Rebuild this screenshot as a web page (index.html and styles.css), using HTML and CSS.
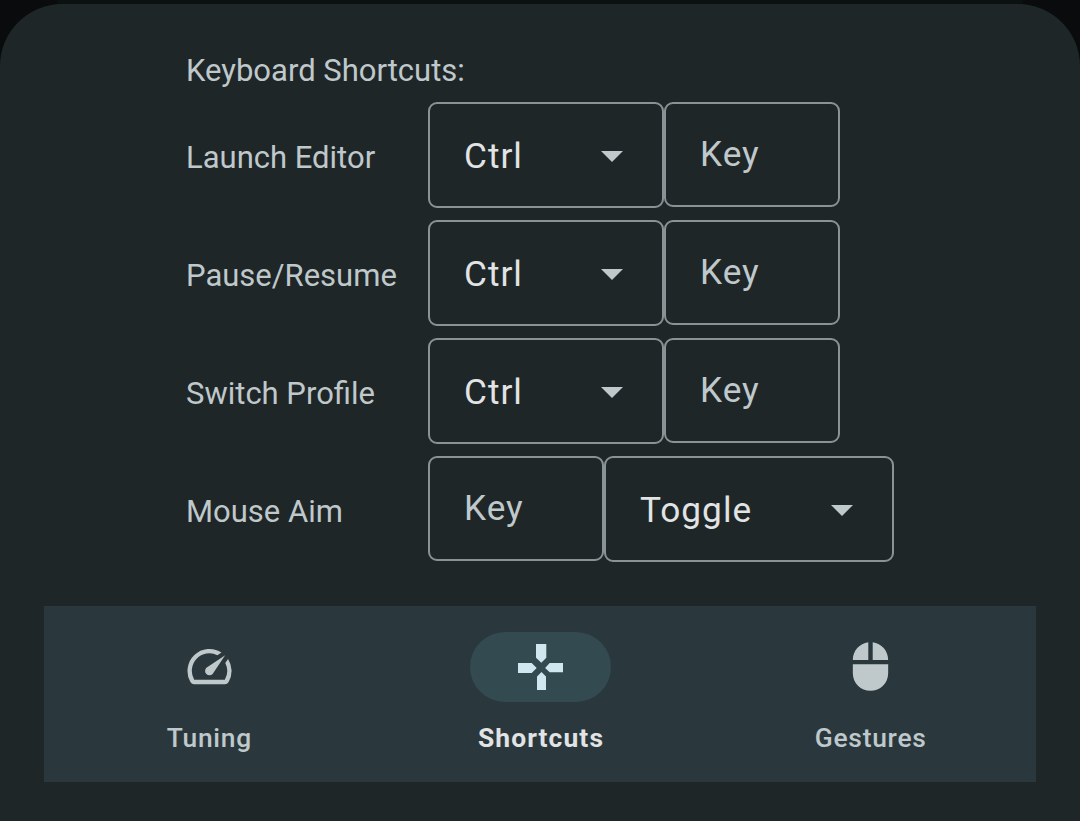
FILE: index.html
```html
<!DOCTYPE html>
<html lang="en">
<head>
<meta charset="utf-8">
<title>Keyboard Shortcuts</title>
<link rel="stylesheet" href="styles.css">
</head>
<body>
<main class="sheet">
  <section class="shortcuts">
    <h1 class="title">Keyboard Shortcuts:</h1>
    <div class="row">
      <span class="label">Launch Editor</span>
      <div class="select"><span>Ctrl</span><svg class="caret" viewBox="0 0 22 11"><path d="M0 0h22L11 11z"/></svg></div>
      <div class="key">Key</div>
    </div>
    <div class="row">
      <span class="label">Pause/Resume</span>
      <div class="select"><span>Ctrl</span><svg class="caret" viewBox="0 0 22 11"><path d="M0 0h22L11 11z"/></svg></div>
      <div class="key">Key</div>
    </div>
    <div class="row">
      <span class="label">Switch Profile</span>
      <div class="select"><span>Ctrl</span><svg class="caret" viewBox="0 0 22 11"><path d="M0 0h22L11 11z"/></svg></div>
      <div class="key">Key</div>
    </div>
    <div class="row">
      <span class="label">Mouse Aim</span>
      <div class="key">Key</div>
      <div class="select select-wide"><span>Toggle</span><svg class="caret" viewBox="0 0 22 11"><path d="M0 0h22L11 11z"/></svg></div>
    </div>
  </section>
  <nav class="tabs">
    <a class="tab">
      <span class="pill"><svg class="icon" viewBox="0 0 24 24"><path d="M20.38 8.57l-1.23 1.85a8 8 0 0 1-.22 7.58H5.07A8 8 0 0 1 15.58 6.85l1.85-1.23A10 10 0 0 0 3.35 19a2 2 0 0 0 1.72 1h13.85a2 2 0 0 0 1.74-1 10 10 0 0 0-.27-10.44zm-9.79 6.84a2 2 0 0 0 2.83 0l5.66-8.49-8.49 5.66a2 2 0 0 0 0 2.83z"/></svg></span>
      <span class="tab-label">Tuning</span>
    </a>
    <a class="tab tab-active">
      <span class="pill"><svg class="icon-pad" viewBox="0 0 45 46"><path d="M18 0h10.3v13.7l-5 5-5.3-5zM0 19h13.7l5 5-5 5H0zM45 19H31.7l-4.6 5 4.6 4.3H45zM19 46h9V32.5L23.5 28 19 32.5z"/></svg></span>
      <span class="tab-label">Shortcuts</span>
    </a>
    <a class="tab">
      <span class="pill"><svg class="icon" viewBox="0 0 24 24"><path d="M13 1.07V9h7c0-4.08-3.05-7.44-7-7.93zM4 15c0 4.42 3.58 8 8 8s8-3.58 8-8v-4H4v4zm7-13.93C7.05 1.56 4 4.92 4 9h7V1.07z"/></svg></span>
      <span class="tab-label">Gestures</span>
    </a>
  </nav>
</main>
</body>
</html>
```
FILE: styles.css
```css
* { box-sizing: border-box; }
body {
  margin: 0;
  padding-top: 4px;
  height: 821px;
  overflow: hidden;
  background: linear-gradient(90deg, #090b0c 57px, #0b1011 57px, #0b1011 1023px, #090b0c 1023px);
  font-family: Roboto, sans-serif;
  color: #bfc8ca;
}
.sheet {
  height: 817px;
  padding: 48px 44px 0;
  border-radius: 62px 62px 0 0;
  background: #1f2628;
}
.shortcuts {
  height: 554px;
  padding-left: 142px;
}
.title {
  margin: 0;
  height: 50px;
  font-size: 31px;
  font-weight: 400;
  line-height: 37px;
}
.row {
  display: flex;
  align-items: flex-start;
  height: 118px;
}
.label {
  width: 242px;
  font-size: 31px;
  line-height: 112px;
}
.select, .key {
  border: 2px solid #899294;
  border-radius: 9px;
  padding-left: 34px;
  font-size: 35.2px;
  letter-spacing: 1px;
}
.select {
  display: flex;
  align-items: center;
  justify-content: space-between;
  width: 236px;
  height: 106px;
  padding: 2px 39.5px 0 34px;
  color: #e1e3e4;
}
.select-wide { width: 290px; }
.key {
  width: 176px;
  height: 105px;
  line-height: 101px;
}
.caret {
  width: 22px;
  height: 11px;
  margin-top: 1px;
  color: #bfc8ca;
}
svg { display: block; fill: currentColor; }
.tabs {
  display: flex;
  height: 176px;
  padding-top: 26px;
  background: #2a383d;
}
.tab {
  flex: 1;
  display: flex;
  flex-direction: column;
  align-items: center;
}
.pill {
  display: flex;
  align-items: center;
  justify-content: center;
  width: 141px;
  height: 70px;
  border-radius: 35px;
}
.icon { width: 53px; height: 53px; margin-bottom: 2px; }
.icon-pad { width: 45px; height: 46px; }
.tab-label {
  margin-top: 18px;
  font-size: 26.4px;
  font-weight: 500;
  line-height: 36px;
  letter-spacing: 0.75px;
}
.tab-active .pill {
  background: #334a50;
  color: #d0e7f0;
}
.tab-active .tab-label {
  padding-left: 2px;
  color: #e1e3e4;
  font-weight: 700;
  letter-spacing: 1.1px;
}
```
